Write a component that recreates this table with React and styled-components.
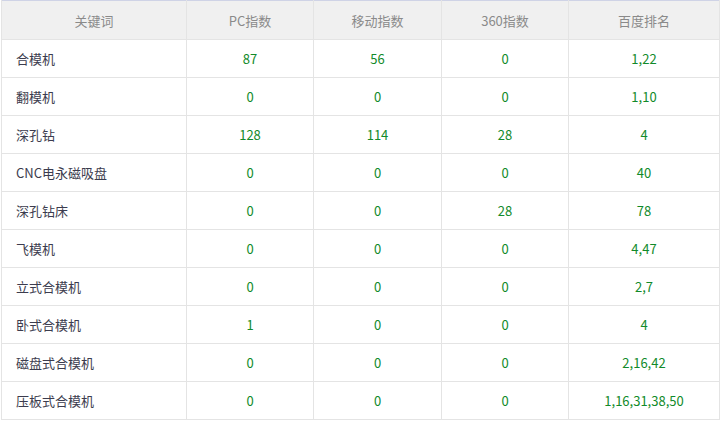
import React from "react";
import styled, { createGlobalStyle } from "styled-components";

const Global = createGlobalStyle`
  html, body { margin: 0; padding: 0; background: #fff; }
  body { font-family: "Noto Sans CJK SC", "Noto Sans", sans-serif; }
`;

const Wrap = styled.div`
  padding: 0 0 0 1px;
`;

const Table = styled.table`
  border-collapse: collapse;
  table-layout: fixed;
  width: 718px;
  font-size: 13px;
  border-top: 1px solid #cfd3e6;
`;

const HeadCell = styled.th`
  height: 38px;
  padding: 0;
  background: #f0f0f0;
  color: #8a8a8a;
  font-weight: normal;
  text-align: center;
  border: 1px solid #e4e4e4;
  border-top: none;
`;

const Cell = styled.td`
  height: 37px;
  padding: 0;
  padding-left: ${(p) => (p.$left ? "14px" : "0")};
  text-align: ${(p) => (p.$left ? "left" : "center")};
  color: ${(p) => (p.$left ? "#3c3c4e" : "#118a2a")};
  border: 1px solid #e4e4e4;
  white-space: nowrap;
`;

const cols = [185, 127, 128, 127, 151];
const heads = ["关键词", "PC指数", "移动指数", "360指数", "百度排名"];
const rows = [
  ["合模机", "87", "56", "0", "1,22"],
  ["翻模机", "0", "0", "0", "1,10"],
  ["深孔钻", "128", "114", "28", "4"],
  ["CNC电永磁吸盘", "0", "0", "0", "40"],
  ["深孔钻床", "0", "0", "28", "78"],
  ["飞模机", "0", "0", "0", "4,47"],
  ["立式合模机", "0", "0", "0", "2,7"],
  ["卧式合模机", "1", "0", "0", "4"],
  ["磁盘式合模机", "0", "0", "0", "2,16,42"],
  ["压板式合模机", "0", "0", "0", "1,16,31,38,50"],
];

export default function App() {
  return (
    <Wrap>
      <Global />
      <Table>
        <colgroup>
          {cols.map((w, i) => (
            <col key={i} style={{ width: w }} />
          ))}
        </colgroup>
        <thead>
          <tr>
            {heads.map((h) => (
              <HeadCell key={h}>{h}</HeadCell>
            ))}
          </tr>
        </thead>
        <tbody>
          {rows.map((r) => (
            <tr key={r[0]}>
              {r.map((c, i) => (
                <Cell key={i} $left={i === 0}>
                  {c}
                </Cell>
              ))}
            </tr>
          ))}
        </tbody>
      </Table>
    </Wrap>
  );
}
